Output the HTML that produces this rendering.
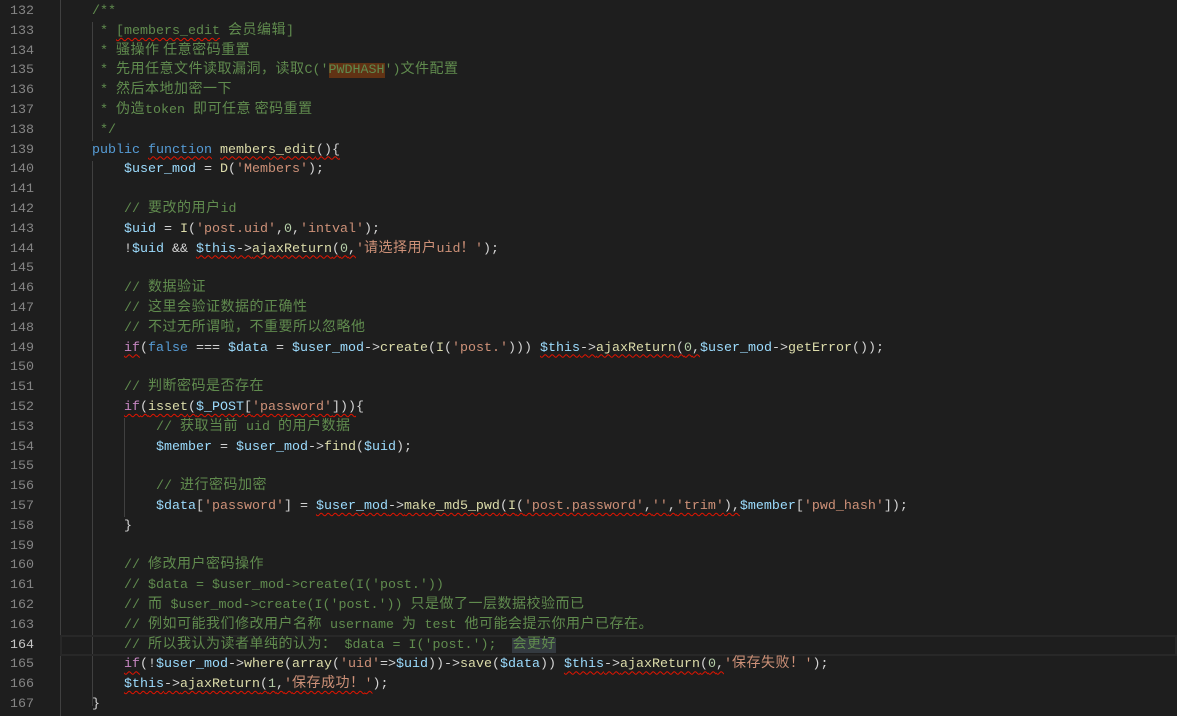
<!DOCTYPE html>
<html><head><meta charset="utf-8"><style>
body{margin:0;width:1177px;height:716px;background:#1e1e1e;overflow:hidden;position:relative;font-family:"Liberation Mono","Noto Sans CJK SC",monospace;font-size:13.33px;color:#d4d4d4}
#g{position:absolute;left:0;top:2px;width:34px;text-align:right;color:#858585}
#g div,#c div{height:19.8px;line-height:19.8px;white-space:pre;overflow:visible}
#c{position:absolute;left:60px;top:2px}
i{font-style:normal;letter-spacing:0.5px;font-family:"Noto Sans CJK SC",sans-serif;font-size:14px;line-height:0;vertical-align:baseline}
.c{color:#608b4e}.k{color:#569cd6}.p{color:#c586c0}.f{color:#dcdcaa}.v{color:#9cdcfe}.s{color:#ce9178}.n{color:#b5cea8}
.w{text-decoration:underline wavy #e51400;text-decoration-thickness:1px;text-underline-offset:3px}
.gd{position:absolute;width:1px;background:#404040}
#cur{position:absolute;left:60px;right:0;top:635px;height:17px;border:2px solid #282828}
</style></head><body>
<div class="gd" style="left:60px;top:0;height:716px"></div>
<div class="gd" style="left:92px;top:22px;height:119px"></div>
<div class="gd" style="left:92px;top:161px;height:545px"></div>
<div class="gd" style="left:124px;top:418px;height:99px"></div>
<div id="cur"></div>
<div id="g">
<div>132</div><div>133</div><div>134</div><div>135</div><div>136</div><div>137</div><div>138</div><div>139</div><div>140</div><div>141</div><div>142</div><div>143</div><div>144</div><div>145</div><div>146</div><div>147</div><div>148</div><div>149</div><div>150</div><div>151</div><div>152</div><div>153</div><div>154</div><div>155</div><div>156</div><div>157</div><div>158</div><div>159</div><div>160</div><div>161</div><div>162</div><div>163</div><div style="color:#c6c6c6">164</div><div>165</div><div>166</div><div>167</div>
</div>
<div id="c">
<div class="c">    /**</div>
<div class="c">     * <span class="w">[members_edit</span> <i>会员编辑</i>]</div>
<div class="c">     * <i>骚操作 任意密码重置</i></div>
<div class="c">     * <i>先用任意文件读取漏洞，读取</i>C('<span style="background:#613214">PWDHASH</span>')<i>文件配置</i></div>
<div class="c">     * <i>然后本地加密一下</i></div>
<div class="c">     * <i>伪造</i>token <i>即可任意 密码重置</i></div>
<div class="c">     */</div>
<div>    <span class="k">public</span> <span class="k w">function</span> <span class="f w">members_edit</span><span class="w">(){</span></div>
<div>        <span class="v">$user_mod</span> = <span class="f">D</span>(<span class="s">'Members'</span>);</div>
<div> </div>
<div>        <span class="c">// <i>要改的用户</i>id</span></div>
<div>        <span class="v">$uid</span> = <span class="f">I</span>(<span class="s">'post.uid'</span>,<span class="n">0</span>,<span class="s">'intval'</span>);</div>
<div>        !<span class="v">$uid</span> &amp;&amp; <span class="w"><span class="v">$this</span>-&gt;<span class="f">ajaxReturn</span>(<span class="n">0</span>,</span><span class="s">'<i>请选择用户</i>uid<i>！</i>'</span>);</div>
<div> </div>
<div>        <span class="c">// <i>数据验证</i></span></div>
<div>        <span class="c">// <i>这里会验证数据的正确性</i></span></div>
<div>        <span class="c">// <i>不过无所谓啦，不重要所以忽略他</i></span></div>
<div>        <span class="p w">if</span>(<span class="k">false</span> === <span class="v">$data</span> = <span class="v">$user_mod</span>-&gt;<span class="f">create</span>(<span class="f">I</span>(<span class="s">'post.'</span>))) <span class="w"><span class="v">$this</span>-&gt;<span class="f">ajaxReturn</span>(<span class="n">0</span>,</span><span class="v">$user_mod</span>-&gt;<span class="f">getError</span>());</div>
<div> </div>
<div>        <span class="c">// <i>判断密码是否存在</i></span></div>
<div>        <span class="w"><span class="p">if</span>(<span class="f">isset</span>(<span class="v">$_POST</span>[<span class="s">'password'</span>]))</span>{</div>
<div>            <span class="c">// <i>获取当前</i> uid <i>的用户数据</i></span></div>
<div>            <span class="v">$member</span> = <span class="v">$user_mod</span>-&gt;<span class="f">find</span>(<span class="v">$uid</span>);</div>
<div> </div>
<div>            <span class="c">// <i>进行密码加密</i></span></div>
<div>            <span class="v">$data</span>[<span class="s">'password'</span>] = <span class="w"><span class="v">$user_mod</span>-&gt;<span class="f">make_md5_pwd</span>(<span class="f">I</span>(<span class="s">'post.password'</span>,<span class="s">''</span>,<span class="s">'trim'</span>),</span><span class="v">$member</span>[<span class="s">'pwd_hash'</span>]);</div>
<div>        }</div>
<div> </div>
<div>        <span class="c">// <i>修改用户密码操作</i></span></div>
<div>        <span class="c">// $data = $user_mod-&gt;create(I('post.'))</span></div>
<div>        <span class="c">// <i>而</i> $user_mod-&gt;create(I('post.')) <i>只是做了一层数据校验而已</i></span></div>
<div>        <span class="c">// <i>例如可能我们修改用户名称</i> username <i>为</i> test <i>他可能会提示你用户已存在。</i></span></div>
<div>        <span class="c">// <i>所以我认为读者单纯的认为：</i> $data = I('post.');  <span style="background:#343a40"><i>会更好</i></span></span></div>
<div>        <span class="p w">if</span>(!<span class="v">$user_mod</span>-&gt;<span class="f">where</span>(<span class="f">array</span>(<span class="s">'uid'</span>=&gt;<span class="v">$uid</span>))-&gt;<span class="f">save</span>(<span class="v">$data</span>)) <span class="w"><span class="v">$this</span>-&gt;<span class="f">ajaxReturn</span>(<span class="n">0</span>,</span><span class="s">'<i>保存失败！</i>'</span>);</div>
<div>        <span class="w"><span class="v">$this</span>-&gt;<span class="f">ajaxReturn</span>(<span class="n">1</span>,<span class="s">'<i>保存成功！</i>'</span></span>);</div>
<div>    }</div>
</div>
</body></html>
